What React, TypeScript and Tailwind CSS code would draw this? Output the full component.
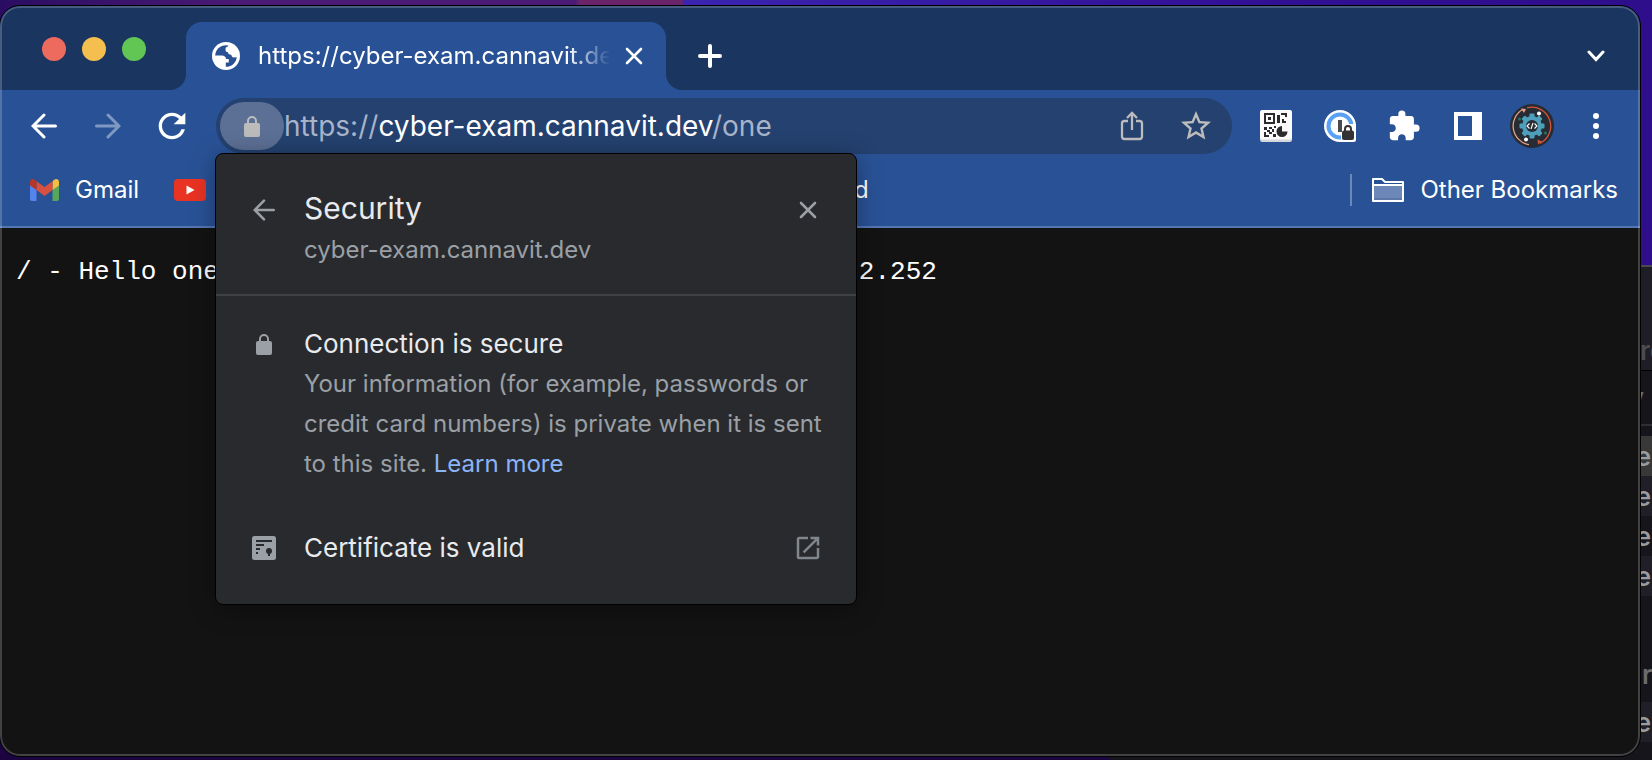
import type { ReactNode } from "react";
import { MdExtension, MdOpenInNew, MdRefresh, MdStarBorder } from "react-icons/md";

type IconProps = { className?: string };

function ArrowLeft({ className }: IconProps) {
  return (
    <svg viewBox="0 0 26 26" fill="none" stroke="currentColor" strokeWidth="3" strokeLinecap="round" className={className}>
      <path d="M24.5 13H2.5M13 2 2 13l11 11" strokeLinejoin="miter" />
    </svg>
  );
}

function Cross({ className }: IconProps) {
  return (
    <svg viewBox="0 0 18 18" fill="none" stroke="currentColor" strokeWidth="2.6" strokeLinecap="round" className={className}>
      <path d="M2 2l14 14M16 2 2 16" />
    </svg>
  );
}

function Lock({ className }: IconProps) {
  return (
    <svg viewBox="0 0 16 21" className={className}>
      <rect x="0" y="7" width="16" height="14" rx="2" fill="currentColor" />
      <path d="M4 8V5a4 4 0 0 1 8 0v3" fill="none" stroke="currentColor" strokeWidth="2" />
    </svg>
  );
}

function Globe({ className }: IconProps) {
  return (
    <svg viewBox="0 0 28 28" className={className}>
      <circle cx="14" cy="14" r="14" fill="#fff" />
      <circle cx="14" cy="14" r="10.800" fill="#295296" />
      <path
        d="M17 2.500c-.6 1-.8 2-2.200 2.600-1 .4-1.300 1.100-1.300 2.300 0 1.500.7 2.600 2.200 2.700.6 2 2 2.800 3.600 2.600.2 1.500 1 2.600 2.600 2.800l4.100-.5V8z"
        fill="#fff"
      />
      <path
        d="M1.500 13.500h8.200c2.600 0 4.300 1.400 4.400 3.500h2.700v3.400h-3v4c0 1.200-.5 2-1.500 2.600L4 24z"
        fill="#fff"
      />
    </svg>
  );
}

function Share({ className }: IconProps) {
  return (
    <svg viewBox="0 0 24 30" fill="none" stroke="currentColor" strokeWidth="2.300" className={className}>
      <path d="M8 10H4.500A2.500 2.500 0 0 0 2 12.500v13A2.500 2.500 0 0 0 4.500 28h15a2.500 2.500 0 0 0 2.500-2.500v-13A2.500 2.500 0 0 0 19.500 10H16" />
      <path d="M12 19V2M7 7l5-5 5 5" />
    </svg>
  );
}

function QrIcon() {
  return (
    <svg viewBox="0 0 32 32" className="size-8">
      <rect width="32" height="32" rx="2.500" fill="#d5d7da" />
      <rect width="32" height="29.500" rx="2.500" fill="#fafafa" />
      <g fill="#2b2b2d">
        <path fillRule="evenodd" d="M4 3h11v11H4zM6 5v7h7V5z" />
        <path d="M8 7h3v3H8zM17 5h3v8h-3zM21 3h6v4h-2V5h-4zM22 9h2v2h2v2h-4zM4 17h3v3H4zM7 20h3v2H7zM9 17h3v2H9zM4 22h2v3h3v2H4zM9 22h3v-3h2v3h-2v2H9zM13 24h3v3h-3zM14 16h2v2h-2z" />
        <path d="M22 16a5.500 5.500 0 1 0 5.500 5.500H22z" />
      </g>
    </svg>
  );
}

function PasswordIcon() {
  return (
    <svg viewBox="0 0 32 32" className="size-8">
      <circle cx="16" cy="16" r="16" fill="#fff" />
      <path d="M16 16h16v13.500a2.500 2.500 0 0 1-2.500 2.500H16z" fill="#fff" />
      <circle cx="16" cy="16" r="11.500" fill="none" stroke="#5aa0f5" strokeWidth="4" />
      <path d="M17 29V19l4-5h11v16H19z" fill="#fff" />
      <rect x="14" y="10" width="4" height="12" fill="#4a4a4c" />
      <rect x="18" y="20.500" width="12" height="9.500" rx="2" fill="#333336" />
      <path d="M21 21v-2a3 3 0 0 1 6 0v2" fill="none" stroke="#333336" strokeWidth="2" />
    </svg>
  );
}

function Avatar() {
  const teeth = [0, 45, 90, 135, 180, 225, 270, 315];
  return (
    <svg viewBox="0 0 44 44" className="size-11">
      <circle cx="22" cy="22" r="22" fill="#272b33" />
      <g fill="none" strokeWidth="1.300">
        <path d="M19 40.700A19 19 0 0 1 13 5.300" stroke="#e8a184" />
        <path d="M17 3.800A19 19 0 0 1 30 39.300" stroke="#d2553b" />
      </g>
      <path d="M11 4.500l5 .5-2 4z" fill="#e8a184" />
      <path d="M32 37.500l-4 3-.500-5z" fill="#d2553b" />
      <g fill="#4d9fba">
        {teeth.map((angle) => (
          <rect key={angle} x="19.500" y="9.500" width="5" height="6" rx="1" transform={`rotate(${angle} 22 22)`} />
        ))}
        <circle cx="22" cy="22" r="10" />
      </g>
      <circle cx="22" cy="22" r="6" fill="#272b33" />
      <path d="M19.500 19.500 17 22l2.500 2.500M24.500 19.500 27 22l-2.500 2.500M23 19l-2 6" fill="none" stroke="#fff" strokeWidth="1.100" />
      <circle cx="29" cy="9.500" r="2" fill="#fff" />
      <circle cx="16" cy="35.500" r="2" fill="#fff" />
      <circle cx="9.500" cy="15" r="1.600" fill="#24705c" />
      <circle cx="35.500" cy="29" r="1.600" fill="#24705c" />
    </svg>
  );
}

function GmailIcon() {
  return (
    <svg viewBox="0 0 29 22" className="h-[22px] w-[29px]">
      <path d="M0 5v15a2 2 0 0 0 2 2h4.500V8z" fill="#5484ec" />
      <path d="M29 5v15a2 2 0 0 1-2 2h-4.500V8z" fill="#58a55c" />
      <path d="M22.500 2.200 24.600.6C26.400-.7 29 .5 29 3v3.500L22.500 11z" fill="#f1bf42" />
      <path d="M6.500 2.200 14.500 8l8-5.800V11l-8 6-8-6z" fill="#d85140" />
      <path d="M0 3C0 .5 2.600-.7 4.400.6l2.100 1.600V11L0 6.500z" fill="#b63629" />
    </svg>
  );
}

function ToolButton({ label, children, className = "" }: { label: string; children: ReactNode; className?: string }) {
  return (
    <button type="button" aria-label={label} className={`flex h-14 w-14 shrink-0 items-center justify-center ${className}`}>
      {children}
    </button>
  );
}

function BackgroundWindow() {
  return (
    <div aria-hidden="true" className="absolute top-[265px] right-0 bottom-0 left-[1109px] flex flex-col items-end overflow-hidden border-t-2 border-[#4c4a50] bg-[#17151c] text-[26px] font-semibold text-[#9b9b9d]">
      <div className="flex h-[104px] w-3 shrink-0 items-end border-b border-black bg-[#1f1d25] text-[#4d4b52]">rc</div>
      <div className="flex h-[55px] w-3 shrink-0 items-center justify-end border-b-2 border-[#302e35] pr-2 text-[#6c6b70]">v</div>
      <div className="h-[10px] shrink-0" />
      <div className="flex h-10 w-3 shrink-0 items-center justify-end bg-[#383838] pr-[1px]">e</div>
      <div className="flex h-10 w-3 shrink-0 items-center justify-end bg-[#201e26] pr-[1px]">e</div>
      <div className="flex h-10 w-3 shrink-0 items-center justify-end pr-[1px]">e</div>
      <div className="flex h-10 w-3 shrink-0 items-center justify-end bg-[#201e26] pr-[1px]">e</div>
      <div className="h-[58px] shrink-0" />
      <div className="flex h-10 w-3 shrink-0 items-center pl-[2px] text-[#6c6b70]">r</div>
      <div className="h-2 shrink-0" />
      <div className="flex h-10 w-3 shrink-0 items-center justify-end bg-[#201e26] pr-[1px]">e</div>
    </div>
  );
}

function TabStrip() {
  return (
    <header className="flex h-[84px] items-end bg-[#1a355f] text-white">
      <div className="h-full w-[186px] shrink-0 bg-[#295296]">
        <div className="flex h-full w-full items-center gap-4 rounded-br-[16px] bg-[#1a355f] pt-[2px] pl-[42px]">
          <button type="button" aria-label="Close window" className="size-6 rounded-full bg-[#ed6a5f]" />
          <button type="button" aria-label="Minimize window" className="size-6 rounded-full bg-[#f5bf4f]" />
          <button type="button" aria-label="Zoom window" className="size-6 rounded-full bg-[#62c655]" />
        </div>
      </div>
      <div className="flex h-full w-[480px] shrink-0 items-end bg-[#1a355f]">
        <div className="flex h-[68px] w-full items-center rounded-t-[16px] bg-[#295296] pr-[22px] pl-[26px]">
          <Globe className="size-7 shrink-0" />
          <span className="ml-[18px] w-[352px] overflow-hidden text-[24px] whitespace-nowrap [mask-image:linear-gradient(to_right,black_310px,transparent_352px)]">
            https://cyber-exam.cannavit.dev/one
          </span>
          <button type="button" aria-label="Close tab" className="ml-auto flex size-5 items-center justify-center">
            <Cross className="size-[18px]" />
          </button>
        </div>
      </div>
      <div className="h-full min-w-0 flex-1 bg-[#295296]">
        <div className="flex h-full items-end rounded-bl-[16px] bg-[#1a355f] pr-4">
          <button type="button" aria-label="New tab" className="ml-4 flex h-[68px] w-14 items-center justify-center">
            <svg viewBox="0 0 24 24" stroke="currentColor" strokeWidth="4" strokeLinecap="round" className="size-6">
              <path d="M12 2v20M2 12h20" />
            </svg>
          </button>
          <button type="button" aria-label="Search tabs" className="ml-auto flex h-[68px] w-14 items-center justify-center">
            <svg viewBox="0 0 18 12" fill="none" stroke="currentColor" strokeWidth="3" strokeLinecap="round" className="h-3 w-[18px]">
              <path d="M2 2l7 7.500L16 2" />
            </svg>
          </button>
        </div>
      </div>
    </header>
  );
}

function SecurityPopup() {
  return (
    <section
      aria-label="Security"
      className="absolute top-[55px] left-[-1px] z-10 w-[642px] rounded-[8px] border border-black bg-[#292a2d] text-[#e8eaed] shadow-[0_4px_24px_rgba(0,0,0,0.35)]"
    >
      <div className="flex h-[142px] items-start border-b-2 border-[#3f4145] px-6 pt-8">
        <button type="button" aria-label="Back" className="flex size-12 items-center justify-center text-[#9aa0a6]">
          <ArrowLeft className="size-[22px]" />
        </button>
        <div className="ml-4 flex-1">
          <h2 className="text-[30px] leading-[44px]">Security</h2>
          <p className="text-[24px] leading-10 text-[#9aa0a6]">cyber-exam.cannavit.dev</p>
        </div>
        <button type="button" aria-label="Close" className="flex size-12 items-center justify-center text-[#9aa0a6]">
          <Cross className="size-[18px]" />
        </button>
      </div>
      <div className="flex px-6 pt-7">
        <div className="flex h-10 w-12 shrink-0 items-center justify-center text-[#9aa0a6]">
          <Lock className="h-[21px] w-4" />
        </div>
        <div className="ml-4 flex-1">
          <h3 className="text-[26px] leading-10">Connection is secure</h3>
          <p className="text-[24px] leading-10 text-[#9aa0a6]">
            Your information (for example, passwords or
            <br />
            credit card numbers) is private when it is sent
            <br />
            to this site.{" "}
            <a href="#learn-more" className="text-[#8ab4f8]">
              Learn more
            </a>
          </p>
        </div>
      </div>
      <div className="flex items-center px-6 pt-11 pb-9">
        <div className="flex w-12 shrink-0 items-center justify-center">
          <svg viewBox="0 0 24 24" className="size-6">
            <rect width="24" height="24" rx="2.500" fill="#9aa0a6" />
            <g fill="#292a2d">
              <path d="M4 4h16v2H4zM4 8h8v2H4zM4 12h4v2H4zM4 16h2v2H4z" />
              <circle cx="17" cy="15" r="3" />
              <path d="M16 16h2v4h-2z" />
            </g>
          </svg>
        </div>
        <span className="ml-4 flex-1 text-[26px] leading-10">Certificate is valid</span>
        <button type="button" aria-label="Show certificate" className="flex h-10 w-12 items-center justify-center text-[#80868b]">
          <MdOpenInNew className="size-[30px]" />
        </button>
      </div>
    </section>
  );
}

function Toolbar() {
  return (
    <div className="flex h-[72px] items-center bg-[#295296] px-4 text-white">
      <nav className="flex gap-2">
        <ToolButton label="Back">
          <ArrowLeft className="size-[26px]" />
        </ToolButton>
        <ToolButton label="Forward" className="text-[#7f98c2]">
          <ArrowLeft className="size-[26px] rotate-180" />
        </ToolButton>
        <ToolButton label="Reload">
          <MdRefresh className="size-10" />
        </ToolButton>
      </nav>
      <div className="relative mx-4 min-w-0 flex-1">
        <div className="flex h-14 items-center rounded-full bg-[#24416f] pl-1 text-[#bcbcbc]">
          <button type="button" aria-label="View site information" className="flex h-12 w-16 shrink-0 items-center justify-center rounded-full bg-[#5c7095]">
            <Lock className="h-[21px] w-4" />
          </button>
          <div className="min-w-0 flex-1 overflow-hidden text-[28px] whitespace-nowrap text-[#a7b4c9]">
            https://<span className="text-white">cyber-exam.cannavit.dev</span>/one
          </div>
          <div className="flex gap-2 pr-2">
            <ToolButton label="Share">
              <Share className="h-[30px] w-6" />
            </ToolButton>
            <ToolButton label="Bookmark this tab">
              <MdStarBorder className="size-9" />
            </ToolButton>
          </div>
        </div>
        <SecurityPopup />
      </div>
      <div className="flex gap-2">
        <ToolButton label="QR code">
          <QrIcon />
        </ToolButton>
        <ToolButton label="Password manager">
          <PasswordIcon />
        </ToolButton>
        <ToolButton label="Extensions">
          <MdExtension className="size-[34px]" />
        </ToolButton>
        <ToolButton label="Side panel">
          <svg viewBox="0 0 28 28" className="size-7">
            <path fillRule="evenodd" d="M0 0h28v28H0zM4 4v20h14V4z" fill="currentColor" />
          </svg>
        </ToolButton>
        <ToolButton label="Profile">
          <Avatar />
        </ToolButton>
        <ToolButton label="Menu">
          <svg viewBox="0 0 6 26" className="h-[26px] w-[6px]" fill="currentColor">
            <circle cx="3" cy="3" r="3" />
            <circle cx="3" cy="13" r="3" />
            <circle cx="3" cy="23" r="3" />
          </svg>
        </ToolButton>
      </div>
    </div>
  );
}

function BookmarksBar() {
  return (
    <div className="flex h-[66px] items-center border-b-2 border-[#5478b4] bg-[#295296] pr-[22px] pb-2 pl-[30px] text-[24px] text-white">
      <a href="#gmail" className="flex items-center gap-4">
        <GmailIcon />
        Gmail
      </a>
      <a href="#youtube" aria-label="YouTube" className="ml-[35px]">
        <svg viewBox="0 0 32 22" className="h-[22px] w-8">
          <rect width="32" height="22" rx="4" fill="#e93323" />
          <path d="M12.500 6.500v9l8-4.500z" fill="#fff" />
        </svg>
      </a>
      <a href="#bookmark" className="ml-[648px]">
        d
      </a>
      <div className="ml-auto flex items-center">
        <div className="h-8 w-[2px] bg-[#6d88b8]" />
        <button type="button" className="ml-5 flex items-center gap-4">
          <svg viewBox="0 0 32 26" className="h-[26px] w-8">
            <path d="M1 24V2h9l3 3h18v19z" fill="#295296" stroke="#fff" strokeWidth="2" strokeLinejoin="round" />
            <path d="M2 9h28v14H2z" fill="#6d88b8" />
            <path d="M2 21h28v2H2z" fill="#5c78a9" />
            <path d="M1 8h30" stroke="#fff" strokeWidth="2" />
          </svg>
          Other Bookmarks
        </button>
      </div>
    </div>
  );
}

export default function App() {
  return (
    <div className="relative flex min-h-screen flex-col overflow-hidden bg-[linear-gradient(to_right,#2a0d62_0,#4a1a74_240px,#4a1a74_575px,#6b2468_580px,#6b2468_682px,#3a24b0_684px,#310f93_1300px,#2f0e8c_100%)] [font-family:Inter,'Liberation_Sans',sans-serif]">
      <div className="absolute inset-x-0 bottom-0 h-[490px] bg-[#1b0440]" />
      <BackgroundWindow />
      <div className="relative mt-[6px] mr-3 mb-1 flex flex-1 flex-col overflow-hidden rounded-[20px] bg-[#131313] outline outline-black">
        <TabStrip />
        <Toolbar />
        <BookmarksBar />
        <main className="flex-1 px-4 pt-7">
          <p className="flex text-[26px] leading-8 text-white [font-family:'Liberation_Mono',monospace]">
            <span>/ - Hello one</span>
            <span className="ml-[640px]">2.252</span>
          </p>
        </main>
        <div className="pointer-events-none absolute inset-0 rounded-[20px] border-2 border-white/20" />
      </div>
    </div>
  );
}
